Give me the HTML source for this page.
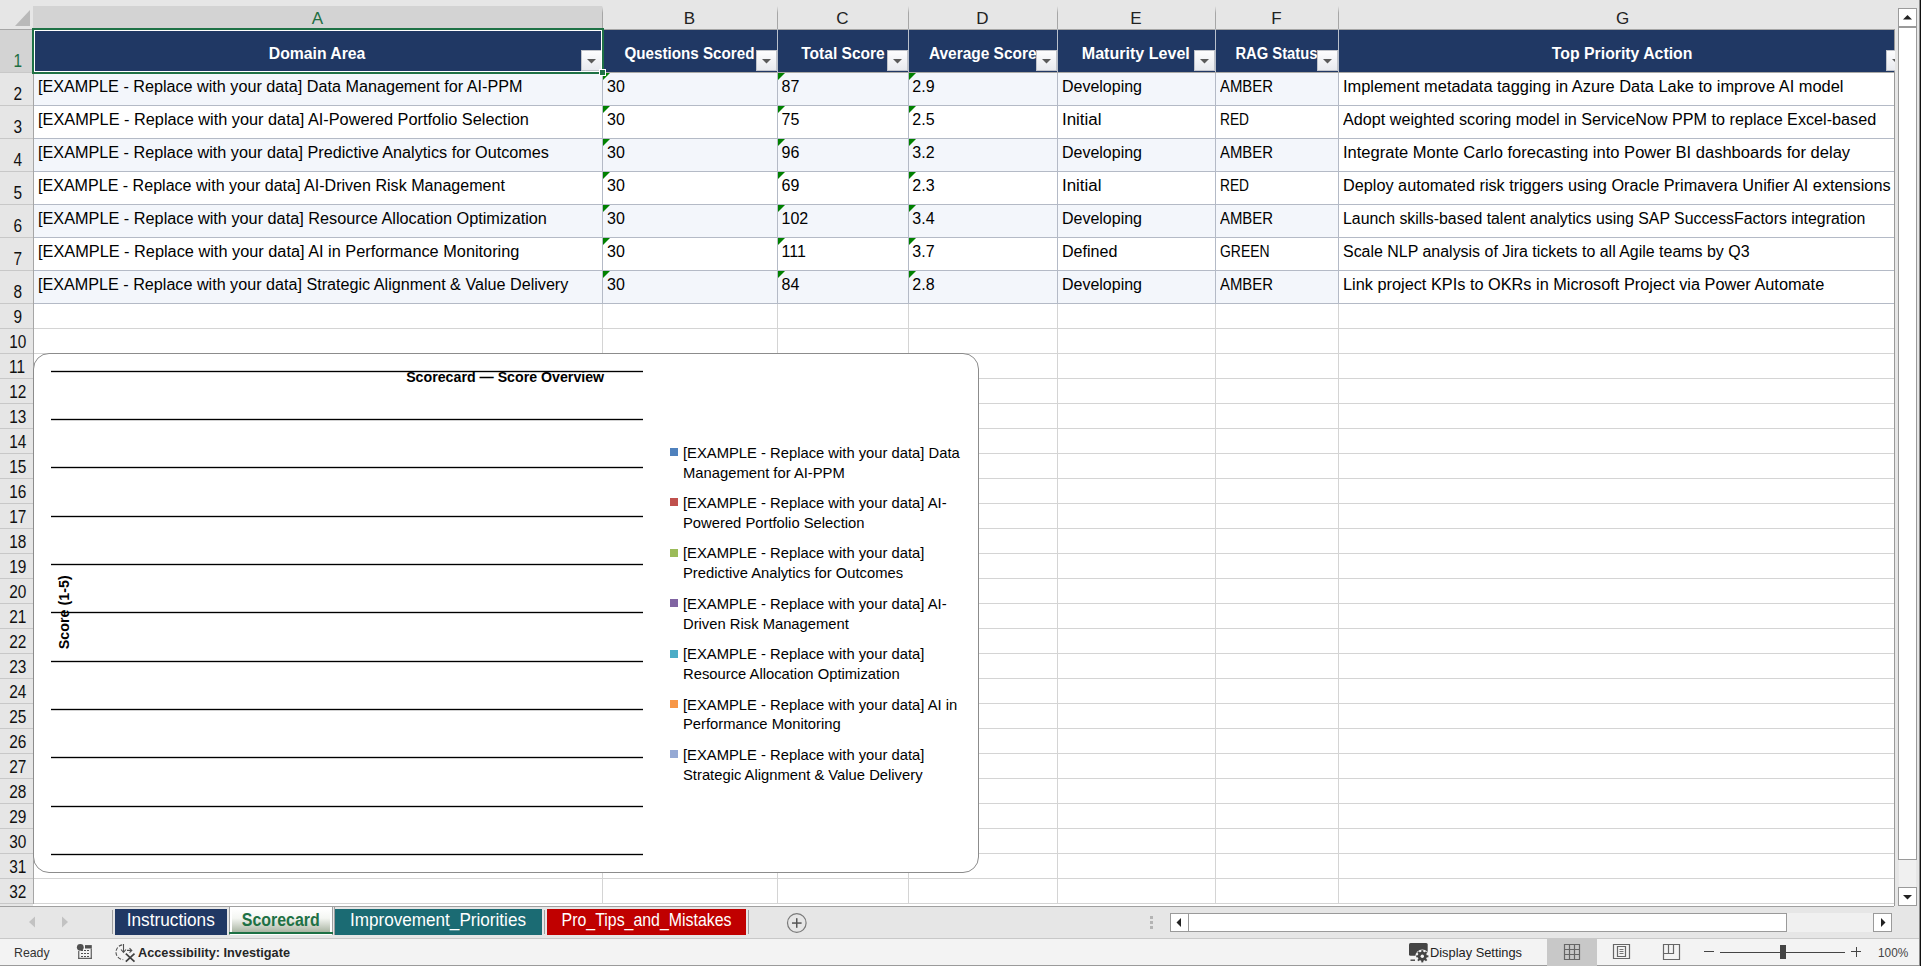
<!DOCTYPE html>
<html><head><meta charset="utf-8"><style>
html,body{margin:0;padding:0;}
body{width:1921px;height:966px;overflow:hidden;position:relative;font-family:"Liberation Sans", sans-serif;background:#fff;}
body div, body svg{position:absolute;}
svg *{position:static}
body div div, body div svg{position:absolute;}
</style></head><body>
<div style="left:0px;top:0px;width:1921px;height:966px;background:#e6e6e6"></div>
<div style="left:33px;top:29px;width:1861px;height:877px;background:#fff"></div>
<div style="left:33px;top:72px;width:1305px;height:33px;background:#f3f6fb"></div>
<div style="left:33px;top:105px;width:1305px;height:33px;background:#ffffff"></div>
<div style="left:33px;top:138px;width:1305px;height:33px;background:#f3f6fb"></div>
<div style="left:33px;top:171px;width:1305px;height:33px;background:#ffffff"></div>
<div style="left:33px;top:204px;width:1305px;height:33px;background:#f3f6fb"></div>
<div style="left:33px;top:237px;width:1305px;height:33px;background:#ffffff"></div>
<div style="left:33px;top:270px;width:1305px;height:33px;background:#f3f6fb"></div>
<div style="left:33px;top:29px;width:1861px;height:43px;background:#203864"></div>
<div style="left:33px;top:6px;width:569px;height:23px;background:#d3d3d3"></div>
<div style="left:0px;top:29px;width:33px;height:43px;background:#d3d3d3"></div>
<div style="left:602px;top:6px;width:1px;height:23px;background:linear-gradient(#e6e6e6,#a6a6a6 30%,#a6a6a6)"></div>
<div style="left:777px;top:6px;width:1px;height:23px;background:linear-gradient(#e6e6e6,#a6a6a6 30%,#a6a6a6)"></div>
<div style="left:908px;top:6px;width:1px;height:23px;background:linear-gradient(#e6e6e6,#a6a6a6 30%,#a6a6a6)"></div>
<div style="left:1057px;top:6px;width:1px;height:23px;background:linear-gradient(#e6e6e6,#a6a6a6 30%,#a6a6a6)"></div>
<div style="left:1215px;top:6px;width:1px;height:23px;background:linear-gradient(#e6e6e6,#a6a6a6 30%,#a6a6a6)"></div>
<div style="left:1338px;top:6px;width:1px;height:23px;background:linear-gradient(#e6e6e6,#a6a6a6 30%,#a6a6a6)"></div>
<div style="left:0px;top:29px;width:1894px;height:1px;background:#a6a6a6"></div>
<div style="left:0px;top:72px;width:33px;height:1px;background:#c8c8c8"></div>
<div style="left:0px;top:105px;width:33px;height:1px;background:#c8c8c8"></div>
<div style="left:0px;top:138px;width:33px;height:1px;background:#c8c8c8"></div>
<div style="left:0px;top:171px;width:33px;height:1px;background:#c8c8c8"></div>
<div style="left:0px;top:204px;width:33px;height:1px;background:#c8c8c8"></div>
<div style="left:0px;top:237px;width:33px;height:1px;background:#c8c8c8"></div>
<div style="left:0px;top:270px;width:33px;height:1px;background:#c8c8c8"></div>
<div style="left:0px;top:303px;width:33px;height:1px;background:#c8c8c8"></div>
<div style="left:0px;top:328px;width:33px;height:1px;background:#c8c8c8"></div>
<div style="left:0px;top:353px;width:33px;height:1px;background:#c8c8c8"></div>
<div style="left:0px;top:378px;width:33px;height:1px;background:#c8c8c8"></div>
<div style="left:0px;top:403px;width:33px;height:1px;background:#c8c8c8"></div>
<div style="left:0px;top:428px;width:33px;height:1px;background:#c8c8c8"></div>
<div style="left:0px;top:453px;width:33px;height:1px;background:#c8c8c8"></div>
<div style="left:0px;top:478px;width:33px;height:1px;background:#c8c8c8"></div>
<div style="left:0px;top:503px;width:33px;height:1px;background:#c8c8c8"></div>
<div style="left:0px;top:528px;width:33px;height:1px;background:#c8c8c8"></div>
<div style="left:0px;top:553px;width:33px;height:1px;background:#c8c8c8"></div>
<div style="left:0px;top:578px;width:33px;height:1px;background:#c8c8c8"></div>
<div style="left:0px;top:603px;width:33px;height:1px;background:#c8c8c8"></div>
<div style="left:0px;top:628px;width:33px;height:1px;background:#c8c8c8"></div>
<div style="left:0px;top:653px;width:33px;height:1px;background:#c8c8c8"></div>
<div style="left:0px;top:678px;width:33px;height:1px;background:#c8c8c8"></div>
<div style="left:0px;top:703px;width:33px;height:1px;background:#c8c8c8"></div>
<div style="left:0px;top:728px;width:33px;height:1px;background:#c8c8c8"></div>
<div style="left:0px;top:753px;width:33px;height:1px;background:#c8c8c8"></div>
<div style="left:0px;top:778px;width:33px;height:1px;background:#c8c8c8"></div>
<div style="left:0px;top:803px;width:33px;height:1px;background:#c8c8c8"></div>
<div style="left:0px;top:828px;width:33px;height:1px;background:#c8c8c8"></div>
<div style="left:0px;top:853px;width:33px;height:1px;background:#c8c8c8"></div>
<div style="left:0px;top:878px;width:33px;height:1px;background:#c8c8c8"></div>
<div style="left:0px;top:903px;width:33px;height:1px;background:#c8c8c8"></div>
<div style="left:33px;top:29px;width:1px;height:877px;background:#a6a6a6"></div>
<div style="left:602px;top:29px;width:1px;height:43px;background:#b8bfcb"></div>
<div style="left:602px;top:72px;width:1px;height:231px;background:#b4bac6"></div>
<div style="left:602px;top:303px;width:1px;height:600px;background:#d4d4d4"></div>
<div style="left:777px;top:29px;width:1px;height:43px;background:#b8bfcb"></div>
<div style="left:777px;top:72px;width:1px;height:231px;background:#b4bac6"></div>
<div style="left:777px;top:303px;width:1px;height:600px;background:#d4d4d4"></div>
<div style="left:908px;top:29px;width:1px;height:43px;background:#b8bfcb"></div>
<div style="left:908px;top:72px;width:1px;height:231px;background:#b4bac6"></div>
<div style="left:908px;top:303px;width:1px;height:600px;background:#d4d4d4"></div>
<div style="left:1057px;top:29px;width:1px;height:43px;background:#b8bfcb"></div>
<div style="left:1057px;top:72px;width:1px;height:231px;background:#b4bac6"></div>
<div style="left:1057px;top:303px;width:1px;height:600px;background:#d4d4d4"></div>
<div style="left:1215px;top:29px;width:1px;height:43px;background:#b8bfcb"></div>
<div style="left:1215px;top:72px;width:1px;height:231px;background:#b4bac6"></div>
<div style="left:1215px;top:303px;width:1px;height:600px;background:#d4d4d4"></div>
<div style="left:1338px;top:29px;width:1px;height:43px;background:#b8bfcb"></div>
<div style="left:1338px;top:72px;width:1px;height:231px;background:#b4bac6"></div>
<div style="left:1338px;top:303px;width:1px;height:600px;background:#d4d4d4"></div>
<div style="left:1894px;top:29px;width:1px;height:877px;background:#9a9a9a"></div>
<div style="left:34px;top:72px;width:1860px;height:1px;background:#aaa9a6"></div>
<div style="left:34px;top:105px;width:1860px;height:1px;background:#b4bac6"></div>
<div style="left:34px;top:138px;width:1860px;height:1px;background:#b4bac6"></div>
<div style="left:34px;top:171px;width:1860px;height:1px;background:#b4bac6"></div>
<div style="left:34px;top:204px;width:1860px;height:1px;background:#b4bac6"></div>
<div style="left:34px;top:237px;width:1860px;height:1px;background:#b4bac6"></div>
<div style="left:34px;top:270px;width:1860px;height:1px;background:#b4bac6"></div>
<div style="left:34px;top:303px;width:1860px;height:1px;background:#b4bac6"></div>
<div style="left:34px;top:328px;width:1860px;height:1px;background:#d4d4d4"></div>
<div style="left:34px;top:353px;width:1860px;height:1px;background:#d4d4d4"></div>
<div style="left:34px;top:378px;width:1860px;height:1px;background:#d4d4d4"></div>
<div style="left:34px;top:403px;width:1860px;height:1px;background:#d4d4d4"></div>
<div style="left:34px;top:428px;width:1860px;height:1px;background:#d4d4d4"></div>
<div style="left:34px;top:453px;width:1860px;height:1px;background:#d4d4d4"></div>
<div style="left:34px;top:478px;width:1860px;height:1px;background:#d4d4d4"></div>
<div style="left:34px;top:503px;width:1860px;height:1px;background:#d4d4d4"></div>
<div style="left:34px;top:528px;width:1860px;height:1px;background:#d4d4d4"></div>
<div style="left:34px;top:553px;width:1860px;height:1px;background:#d4d4d4"></div>
<div style="left:34px;top:578px;width:1860px;height:1px;background:#d4d4d4"></div>
<div style="left:34px;top:603px;width:1860px;height:1px;background:#d4d4d4"></div>
<div style="left:34px;top:628px;width:1860px;height:1px;background:#d4d4d4"></div>
<div style="left:34px;top:653px;width:1860px;height:1px;background:#d4d4d4"></div>
<div style="left:34px;top:678px;width:1860px;height:1px;background:#d4d4d4"></div>
<div style="left:34px;top:703px;width:1860px;height:1px;background:#d4d4d4"></div>
<div style="left:34px;top:728px;width:1860px;height:1px;background:#d4d4d4"></div>
<div style="left:34px;top:753px;width:1860px;height:1px;background:#d4d4d4"></div>
<div style="left:34px;top:778px;width:1860px;height:1px;background:#d4d4d4"></div>
<div style="left:34px;top:803px;width:1860px;height:1px;background:#d4d4d4"></div>
<div style="left:34px;top:828px;width:1860px;height:1px;background:#d4d4d4"></div>
<div style="left:34px;top:853px;width:1860px;height:1px;background:#d4d4d4"></div>
<div style="left:34px;top:878px;width:1860px;height:1px;background:#d4d4d4"></div>
<div style="left:34px;top:903px;width:1860px;height:1px;background:#d4d4d4"></div>
<div style="left:0px;top:906px;width:1894px;height:1px;background:#a0a0a0"></div>
<div style="left:33px;top:904px;width:1861px;height:2px;background:#fff"></div>
<svg style="left:0;top:0" width="33" height="29"><polygon points="15,26 30,26 30,10" fill="#b9b9b9"/></svg>
<div style="left:311.83px;top:9.61px;font-size:17px;line-height:17px;font-weight:normal;color:#1e6e42;white-space:pre;transform-origin:50% 0;transform:scaleX(1.0000)">A</div>
<div style="left:683.83px;top:9.61px;font-size:17px;line-height:17px;font-weight:normal;color:#222;white-space:pre;transform-origin:50% 0;transform:scaleX(1.0000)">B</div>
<div style="left:836.36px;top:9.61px;font-size:17px;line-height:17px;font-weight:normal;color:#222;white-space:pre;transform-origin:50% 0;transform:scaleX(1.0000)">C</div>
<div style="left:976.36px;top:9.61px;font-size:17px;line-height:17px;font-weight:normal;color:#222;white-space:pre;transform-origin:50% 0;transform:scaleX(1.0000)">D</div>
<div style="left:1130.33px;top:9.61px;font-size:17px;line-height:17px;font-weight:normal;color:#222;white-space:pre;transform-origin:50% 0;transform:scaleX(1.0000)">E</div>
<div style="left:1271.30px;top:9.61px;font-size:17px;line-height:17px;font-weight:normal;color:#222;white-space:pre;transform-origin:50% 0;transform:scaleX(1.0000)">F</div>
<div style="left:1615.88px;top:9.61px;font-size:17px;line-height:17px;font-weight:normal;color:#222;white-space:pre;transform-origin:50% 0;transform:scaleX(1.0000)">G</div>
<div style="left:12.63px;top:52.59px;font-size:17.5px;line-height:17.5px;font-weight:normal;color:#1e6e42;white-space:pre;transform-origin:50% 0;transform:scaleX(0.8800)">1</div>
<div style="left:12.63px;top:85.59px;font-size:17.5px;line-height:17.5px;font-weight:normal;color:#111;white-space:pre;transform-origin:50% 0;transform:scaleX(0.8800)">2</div>
<div style="left:12.63px;top:118.59px;font-size:17.5px;line-height:17.5px;font-weight:normal;color:#111;white-space:pre;transform-origin:50% 0;transform:scaleX(0.8800)">3</div>
<div style="left:12.63px;top:151.59px;font-size:17.5px;line-height:17.5px;font-weight:normal;color:#111;white-space:pre;transform-origin:50% 0;transform:scaleX(0.8800)">4</div>
<div style="left:12.63px;top:184.59px;font-size:17.5px;line-height:17.5px;font-weight:normal;color:#111;white-space:pre;transform-origin:50% 0;transform:scaleX(0.8800)">5</div>
<div style="left:12.63px;top:217.59px;font-size:17.5px;line-height:17.5px;font-weight:normal;color:#111;white-space:pre;transform-origin:50% 0;transform:scaleX(0.8800)">6</div>
<div style="left:12.63px;top:250.59px;font-size:17.5px;line-height:17.5px;font-weight:normal;color:#111;white-space:pre;transform-origin:50% 0;transform:scaleX(0.8800)">7</div>
<div style="left:12.63px;top:283.59px;font-size:17.5px;line-height:17.5px;font-weight:normal;color:#111;white-space:pre;transform-origin:50% 0;transform:scaleX(0.8800)">8</div>
<div style="left:12.63px;top:308.59px;font-size:17.5px;line-height:17.5px;font-weight:normal;color:#111;white-space:pre;transform-origin:50% 0;transform:scaleX(0.8800)">9</div>
<div style="left:7.77px;top:333.59px;font-size:17.5px;line-height:17.5px;font-weight:normal;color:#111;white-space:pre;transform-origin:50% 0;transform:scaleX(0.8800)">10</div>
<div style="left:8.41px;top:358.59px;font-size:17.5px;line-height:17.5px;font-weight:normal;color:#111;white-space:pre;transform-origin:50% 0;transform:scaleX(0.8800)">11</div>
<div style="left:7.77px;top:383.59px;font-size:17.5px;line-height:17.5px;font-weight:normal;color:#111;white-space:pre;transform-origin:50% 0;transform:scaleX(0.8800)">12</div>
<div style="left:7.77px;top:408.59px;font-size:17.5px;line-height:17.5px;font-weight:normal;color:#111;white-space:pre;transform-origin:50% 0;transform:scaleX(0.8800)">13</div>
<div style="left:7.77px;top:433.59px;font-size:17.5px;line-height:17.5px;font-weight:normal;color:#111;white-space:pre;transform-origin:50% 0;transform:scaleX(0.8800)">14</div>
<div style="left:7.77px;top:458.59px;font-size:17.5px;line-height:17.5px;font-weight:normal;color:#111;white-space:pre;transform-origin:50% 0;transform:scaleX(0.8800)">15</div>
<div style="left:7.77px;top:483.59px;font-size:17.5px;line-height:17.5px;font-weight:normal;color:#111;white-space:pre;transform-origin:50% 0;transform:scaleX(0.8800)">16</div>
<div style="left:7.77px;top:508.59px;font-size:17.5px;line-height:17.5px;font-weight:normal;color:#111;white-space:pre;transform-origin:50% 0;transform:scaleX(0.8800)">17</div>
<div style="left:7.77px;top:533.59px;font-size:17.5px;line-height:17.5px;font-weight:normal;color:#111;white-space:pre;transform-origin:50% 0;transform:scaleX(0.8800)">18</div>
<div style="left:7.77px;top:558.59px;font-size:17.5px;line-height:17.5px;font-weight:normal;color:#111;white-space:pre;transform-origin:50% 0;transform:scaleX(0.8800)">19</div>
<div style="left:7.77px;top:583.59px;font-size:17.5px;line-height:17.5px;font-weight:normal;color:#111;white-space:pre;transform-origin:50% 0;transform:scaleX(0.8800)">20</div>
<div style="left:7.77px;top:608.59px;font-size:17.5px;line-height:17.5px;font-weight:normal;color:#111;white-space:pre;transform-origin:50% 0;transform:scaleX(0.8800)">21</div>
<div style="left:7.77px;top:633.59px;font-size:17.5px;line-height:17.5px;font-weight:normal;color:#111;white-space:pre;transform-origin:50% 0;transform:scaleX(0.8800)">22</div>
<div style="left:7.77px;top:658.59px;font-size:17.5px;line-height:17.5px;font-weight:normal;color:#111;white-space:pre;transform-origin:50% 0;transform:scaleX(0.8800)">23</div>
<div style="left:7.77px;top:683.59px;font-size:17.5px;line-height:17.5px;font-weight:normal;color:#111;white-space:pre;transform-origin:50% 0;transform:scaleX(0.8800)">24</div>
<div style="left:7.77px;top:708.59px;font-size:17.5px;line-height:17.5px;font-weight:normal;color:#111;white-space:pre;transform-origin:50% 0;transform:scaleX(0.8800)">25</div>
<div style="left:7.77px;top:733.59px;font-size:17.5px;line-height:17.5px;font-weight:normal;color:#111;white-space:pre;transform-origin:50% 0;transform:scaleX(0.8800)">26</div>
<div style="left:7.77px;top:758.59px;font-size:17.5px;line-height:17.5px;font-weight:normal;color:#111;white-space:pre;transform-origin:50% 0;transform:scaleX(0.8800)">27</div>
<div style="left:7.77px;top:783.59px;font-size:17.5px;line-height:17.5px;font-weight:normal;color:#111;white-space:pre;transform-origin:50% 0;transform:scaleX(0.8800)">28</div>
<div style="left:7.77px;top:808.59px;font-size:17.5px;line-height:17.5px;font-weight:normal;color:#111;white-space:pre;transform-origin:50% 0;transform:scaleX(0.8800)">29</div>
<div style="left:7.77px;top:833.59px;font-size:17.5px;line-height:17.5px;font-weight:normal;color:#111;white-space:pre;transform-origin:50% 0;transform:scaleX(0.8800)">30</div>
<div style="left:7.77px;top:858.59px;font-size:17.5px;line-height:17.5px;font-weight:normal;color:#111;white-space:pre;transform-origin:50% 0;transform:scaleX(0.8800)">31</div>
<div style="left:7.77px;top:883.59px;font-size:17.5px;line-height:17.5px;font-weight:normal;color:#111;white-space:pre;transform-origin:50% 0;transform:scaleX(0.8800)">32</div>
<div style="left:268.45px;top:45.76px;font-size:16px;line-height:16px;font-weight:bold;color:#fff;white-space:pre;transform-origin:50% 0;transform:scaleX(0.9846)">Domain Area</div>
<div style="left:621.04px;top:45.76px;font-size:16px;line-height:16px;font-weight:bold;color:#fff;white-space:pre;transform-origin:50% 0;transform:scaleX(0.9494)">Questions Scored</div>
<div style="left:799.52px;top:45.76px;font-size:16px;line-height:16px;font-weight:bold;color:#fff;white-space:pre;transform-origin:50% 0;transform:scaleX(0.9715)">Total Score</div>
<div style="left:926.77px;top:45.76px;font-size:16px;line-height:16px;font-weight:bold;color:#fff;white-space:pre;transform-origin:50% 0;transform:scaleX(0.9653)">Average Score</div>
<div style="left:1082.20px;top:45.76px;font-size:16px;line-height:16px;font-weight:bold;color:#fff;white-space:pre;transform-origin:50% 0;transform:scaleX(1.0038)">Maturity Level</div>
<div style="left:1232.05px;top:45.76px;font-size:16px;line-height:16px;font-weight:bold;color:#fff;white-space:pre;transform-origin:50% 0;transform:scaleX(0.9223)">RAG Status</div>
<div style="left:1551.09px;top:45.76px;font-size:16px;line-height:16px;font-weight:bold;color:#fff;white-space:pre;transform-origin:50% 0;transform:scaleX(0.9879)">Top Priority Action</div>
<div style="left:581px;top:50px;width:19px;height:19px;border:1px solid #c0c3ca;background:linear-gradient(#fdfdfe,#e8eaef)"><svg style="left:5px;top:8px" width="9" height="5"><polygon points="0,0 9,0 4.5,4.5" fill="#5a5a5a"/></svg></div>
<div style="left:756px;top:50px;width:19px;height:19px;border:1px solid #c0c3ca;background:linear-gradient(#fdfdfe,#e8eaef)"><svg style="left:5px;top:8px" width="9" height="5"><polygon points="0,0 9,0 4.5,4.5" fill="#5a5a5a"/></svg></div>
<div style="left:887px;top:50px;width:19px;height:19px;border:1px solid #c0c3ca;background:linear-gradient(#fdfdfe,#e8eaef)"><svg style="left:5px;top:8px" width="9" height="5"><polygon points="0,0 9,0 4.5,4.5" fill="#5a5a5a"/></svg></div>
<div style="left:1036px;top:50px;width:19px;height:19px;border:1px solid #c0c3ca;background:linear-gradient(#fdfdfe,#e8eaef)"><svg style="left:5px;top:8px" width="9" height="5"><polygon points="0,0 9,0 4.5,4.5" fill="#5a5a5a"/></svg></div>
<div style="left:1194px;top:50px;width:19px;height:19px;border:1px solid #c0c3ca;background:linear-gradient(#fdfdfe,#e8eaef)"><svg style="left:5px;top:8px" width="9" height="5"><polygon points="0,0 9,0 4.5,4.5" fill="#5a5a5a"/></svg></div>
<div style="left:1317px;top:50px;width:19px;height:19px;border:1px solid #c0c3ca;background:linear-gradient(#fdfdfe,#e8eaef)"><svg style="left:5px;top:8px" width="9" height="5"><polygon points="0,0 9,0 4.5,4.5" fill="#5a5a5a"/></svg></div>
<div style="left:1886px;top:50px;width:19px;height:19px;border:1px solid #c0c3ca;background:linear-gradient(#fdfdfe,#e8eaef)"><svg style="left:5px;top:8px" width="9" height="5"><polygon points="0,0 9,0 4.5,4.5" fill="#5a5a5a"/></svg></div>
<div style="left:38.30px;top:79.46px;font-size:16px;line-height:16px;font-weight:normal;color:#000;white-space:pre;transform-origin:0 0;transform:scaleX(1.0108)">[EXAMPLE - Replace with your data] Data Management for AI-PPM</div>
<div style="left:607.00px;top:79.46px;font-size:16px;line-height:16px;font-weight:normal;color:#000;white-space:pre;transform-origin:0 0;transform:scaleX(1.0000)">30</div>
<div style="left:781.50px;top:79.46px;font-size:16px;line-height:16px;font-weight:normal;color:#000;white-space:pre;transform-origin:0 0;transform:scaleX(1.0000)">87</div>
<div style="left:912.30px;top:79.46px;font-size:16px;line-height:16px;font-weight:normal;color:#000;white-space:pre;transform-origin:0 0;transform:scaleX(1.0000)">2.9</div>
<div style="left:1061.80px;top:79.46px;font-size:16px;line-height:16px;font-weight:normal;color:#000;white-space:pre;transform-origin:0 0;transform:scaleX(0.9992)">Developing</div>
<div style="left:1219.50px;top:79.46px;font-size:16px;line-height:16px;font-weight:normal;color:#000;white-space:pre;transform-origin:0 0;transform:scaleX(0.9314)">AMBER</div>
<div style="left:1343.00px;top:79.46px;font-size:16px;line-height:16px;font-weight:normal;color:#000;white-space:pre;transform-origin:0 0;transform:scaleX(1.0250)">Implement metadata tagging in Azure Data Lake to improve AI model</div>
<svg style="left:603px;top:73px" width="8" height="8"><polygon points="0,0 7,0 0,7" fill="#008000"/></svg>
<svg style="left:778px;top:73px" width="8" height="8"><polygon points="0,0 7,0 0,7" fill="#008000"/></svg>
<svg style="left:909px;top:73px" width="8" height="8"><polygon points="0,0 7,0 0,7" fill="#008000"/></svg>
<div style="left:38.30px;top:112.46px;font-size:16px;line-height:16px;font-weight:normal;color:#000;white-space:pre;transform-origin:0 0;transform:scaleX(1.0184)">[EXAMPLE - Replace with your data] AI-Powered Portfolio Selection</div>
<div style="left:607.00px;top:112.46px;font-size:16px;line-height:16px;font-weight:normal;color:#000;white-space:pre;transform-origin:0 0;transform:scaleX(1.0000)">30</div>
<div style="left:781.50px;top:112.46px;font-size:16px;line-height:16px;font-weight:normal;color:#000;white-space:pre;transform-origin:0 0;transform:scaleX(1.0000)">75</div>
<div style="left:912.30px;top:112.46px;font-size:16px;line-height:16px;font-weight:normal;color:#000;white-space:pre;transform-origin:0 0;transform:scaleX(1.0000)">2.5</div>
<div style="left:1061.80px;top:112.46px;font-size:16px;line-height:16px;font-weight:normal;color:#000;white-space:pre;transform-origin:0 0;transform:scaleX(1.0573)">Initial</div>
<div style="left:1219.50px;top:112.46px;font-size:16px;line-height:16px;font-weight:normal;color:#000;white-space:pre;transform-origin:0 0;transform:scaleX(0.8585)">RED</div>
<div style="left:1343.00px;top:112.46px;font-size:16px;line-height:16px;font-weight:normal;color:#000;white-space:pre;transform-origin:0 0;transform:scaleX(1.0109)">Adopt weighted scoring model in ServiceNow PPM to replace Excel-based</div>
<svg style="left:603px;top:106px" width="8" height="8"><polygon points="0,0 7,0 0,7" fill="#008000"/></svg>
<svg style="left:778px;top:106px" width="8" height="8"><polygon points="0,0 7,0 0,7" fill="#008000"/></svg>
<svg style="left:909px;top:106px" width="8" height="8"><polygon points="0,0 7,0 0,7" fill="#008000"/></svg>
<div style="left:38.30px;top:145.46px;font-size:16px;line-height:16px;font-weight:normal;color:#000;white-space:pre;transform-origin:0 0;transform:scaleX(1.0134)">[EXAMPLE - Replace with your data] Predictive Analytics for Outcomes</div>
<div style="left:607.00px;top:145.46px;font-size:16px;line-height:16px;font-weight:normal;color:#000;white-space:pre;transform-origin:0 0;transform:scaleX(1.0000)">30</div>
<div style="left:781.50px;top:145.46px;font-size:16px;line-height:16px;font-weight:normal;color:#000;white-space:pre;transform-origin:0 0;transform:scaleX(1.0000)">96</div>
<div style="left:912.30px;top:145.46px;font-size:16px;line-height:16px;font-weight:normal;color:#000;white-space:pre;transform-origin:0 0;transform:scaleX(1.0000)">3.2</div>
<div style="left:1061.80px;top:145.46px;font-size:16px;line-height:16px;font-weight:normal;color:#000;white-space:pre;transform-origin:0 0;transform:scaleX(0.9992)">Developing</div>
<div style="left:1219.50px;top:145.46px;font-size:16px;line-height:16px;font-weight:normal;color:#000;white-space:pre;transform-origin:0 0;transform:scaleX(0.9314)">AMBER</div>
<div style="left:1343.00px;top:145.46px;font-size:16px;line-height:16px;font-weight:normal;color:#000;white-space:pre;transform-origin:0 0;transform:scaleX(1.0329)">Integrate Monte Carlo forecasting into Power BI dashboards for delay</div>
<svg style="left:603px;top:139px" width="8" height="8"><polygon points="0,0 7,0 0,7" fill="#008000"/></svg>
<svg style="left:778px;top:139px" width="8" height="8"><polygon points="0,0 7,0 0,7" fill="#008000"/></svg>
<svg style="left:909px;top:139px" width="8" height="8"><polygon points="0,0 7,0 0,7" fill="#008000"/></svg>
<div style="left:38.30px;top:178.46px;font-size:16px;line-height:16px;font-weight:normal;color:#000;white-space:pre;transform-origin:0 0;transform:scaleX(1.0039)">[EXAMPLE - Replace with your data] AI-Driven Risk Management</div>
<div style="left:607.00px;top:178.46px;font-size:16px;line-height:16px;font-weight:normal;color:#000;white-space:pre;transform-origin:0 0;transform:scaleX(1.0000)">30</div>
<div style="left:781.50px;top:178.46px;font-size:16px;line-height:16px;font-weight:normal;color:#000;white-space:pre;transform-origin:0 0;transform:scaleX(1.0000)">69</div>
<div style="left:912.30px;top:178.46px;font-size:16px;line-height:16px;font-weight:normal;color:#000;white-space:pre;transform-origin:0 0;transform:scaleX(1.0000)">2.3</div>
<div style="left:1061.80px;top:178.46px;font-size:16px;line-height:16px;font-weight:normal;color:#000;white-space:pre;transform-origin:0 0;transform:scaleX(1.0573)">Initial</div>
<div style="left:1219.50px;top:178.46px;font-size:16px;line-height:16px;font-weight:normal;color:#000;white-space:pre;transform-origin:0 0;transform:scaleX(0.8585)">RED</div>
<div style="left:1343.00px;top:178.46px;font-size:16px;line-height:16px;font-weight:normal;color:#000;white-space:pre;transform-origin:0 0;transform:scaleX(1.0161)">Deploy automated risk triggers using Oracle Primavera Unifier AI extensions</div>
<svg style="left:603px;top:172px" width="8" height="8"><polygon points="0,0 7,0 0,7" fill="#008000"/></svg>
<svg style="left:778px;top:172px" width="8" height="8"><polygon points="0,0 7,0 0,7" fill="#008000"/></svg>
<svg style="left:909px;top:172px" width="8" height="8"><polygon points="0,0 7,0 0,7" fill="#008000"/></svg>
<div style="left:38.30px;top:211.46px;font-size:16px;line-height:16px;font-weight:normal;color:#000;white-space:pre;transform-origin:0 0;transform:scaleX(1.0164)">[EXAMPLE - Replace with your data] Resource Allocation Optimization</div>
<div style="left:607.00px;top:211.46px;font-size:16px;line-height:16px;font-weight:normal;color:#000;white-space:pre;transform-origin:0 0;transform:scaleX(1.0000)">30</div>
<div style="left:781.50px;top:211.46px;font-size:16px;line-height:16px;font-weight:normal;color:#000;white-space:pre;transform-origin:0 0;transform:scaleX(1.0000)">102</div>
<div style="left:912.30px;top:211.46px;font-size:16px;line-height:16px;font-weight:normal;color:#000;white-space:pre;transform-origin:0 0;transform:scaleX(1.0000)">3.4</div>
<div style="left:1061.80px;top:211.46px;font-size:16px;line-height:16px;font-weight:normal;color:#000;white-space:pre;transform-origin:0 0;transform:scaleX(0.9992)">Developing</div>
<div style="left:1219.50px;top:211.46px;font-size:16px;line-height:16px;font-weight:normal;color:#000;white-space:pre;transform-origin:0 0;transform:scaleX(0.9314)">AMBER</div>
<div style="left:1343.00px;top:211.46px;font-size:16px;line-height:16px;font-weight:normal;color:#000;white-space:pre;transform-origin:0 0;transform:scaleX(0.9909)">Launch skills-based talent analytics using SAP SuccessFactors integration</div>
<svg style="left:603px;top:205px" width="8" height="8"><polygon points="0,0 7,0 0,7" fill="#008000"/></svg>
<svg style="left:778px;top:205px" width="8" height="8"><polygon points="0,0 7,0 0,7" fill="#008000"/></svg>
<svg style="left:909px;top:205px" width="8" height="8"><polygon points="0,0 7,0 0,7" fill="#008000"/></svg>
<div style="left:38.30px;top:244.46px;font-size:16px;line-height:16px;font-weight:normal;color:#000;white-space:pre;transform-origin:0 0;transform:scaleX(1.0194)">[EXAMPLE - Replace with your data] AI in Performance Monitoring</div>
<div style="left:607.00px;top:244.46px;font-size:16px;line-height:16px;font-weight:normal;color:#000;white-space:pre;transform-origin:0 0;transform:scaleX(1.0000)">30</div>
<div style="left:781.50px;top:244.46px;font-size:16px;line-height:16px;font-weight:normal;color:#000;white-space:pre;transform-origin:0 0;transform:scaleX(1.0000)">111</div>
<div style="left:912.30px;top:244.46px;font-size:16px;line-height:16px;font-weight:normal;color:#000;white-space:pre;transform-origin:0 0;transform:scaleX(1.0000)">3.7</div>
<div style="left:1061.80px;top:244.46px;font-size:16px;line-height:16px;font-weight:normal;color:#000;white-space:pre;transform-origin:0 0;transform:scaleX(1.0044)">Defined</div>
<div style="left:1219.50px;top:244.46px;font-size:16px;line-height:16px;font-weight:normal;color:#000;white-space:pre;transform-origin:0 0;transform:scaleX(0.8716)">GREEN</div>
<div style="left:1343.00px;top:244.46px;font-size:16px;line-height:16px;font-weight:normal;color:#000;white-space:pre;transform-origin:0 0;transform:scaleX(0.9966)">Scale NLP analysis of Jira tickets to all Agile teams by Q3</div>
<svg style="left:603px;top:238px" width="8" height="8"><polygon points="0,0 7,0 0,7" fill="#008000"/></svg>
<svg style="left:778px;top:238px" width="8" height="8"><polygon points="0,0 7,0 0,7" fill="#008000"/></svg>
<svg style="left:909px;top:238px" width="8" height="8"><polygon points="0,0 7,0 0,7" fill="#008000"/></svg>
<div style="left:38.30px;top:277.46px;font-size:16px;line-height:16px;font-weight:normal;color:#000;white-space:pre;transform-origin:0 0;transform:scaleX(1.0096)">[EXAMPLE - Replace with your data] Strategic Alignment &amp; Value Delivery</div>
<div style="left:607.00px;top:277.46px;font-size:16px;line-height:16px;font-weight:normal;color:#000;white-space:pre;transform-origin:0 0;transform:scaleX(1.0000)">30</div>
<div style="left:781.50px;top:277.46px;font-size:16px;line-height:16px;font-weight:normal;color:#000;white-space:pre;transform-origin:0 0;transform:scaleX(1.0000)">84</div>
<div style="left:912.30px;top:277.46px;font-size:16px;line-height:16px;font-weight:normal;color:#000;white-space:pre;transform-origin:0 0;transform:scaleX(1.0000)">2.8</div>
<div style="left:1061.80px;top:277.46px;font-size:16px;line-height:16px;font-weight:normal;color:#000;white-space:pre;transform-origin:0 0;transform:scaleX(0.9992)">Developing</div>
<div style="left:1219.50px;top:277.46px;font-size:16px;line-height:16px;font-weight:normal;color:#000;white-space:pre;transform-origin:0 0;transform:scaleX(0.9314)">AMBER</div>
<div style="left:1343.00px;top:277.46px;font-size:16px;line-height:16px;font-weight:normal;color:#000;white-space:pre;transform-origin:0 0;transform:scaleX(1.0191)">Link project KPIs to OKRs in Microsoft Project via Power Automate</div>
<svg style="left:603px;top:271px" width="8" height="8"><polygon points="0,0 7,0 0,7" fill="#008000"/></svg>
<svg style="left:778px;top:271px" width="8" height="8"><polygon points="0,0 7,0 0,7" fill="#008000"/></svg>
<svg style="left:909px;top:271px" width="8" height="8"><polygon points="0,0 7,0 0,7" fill="#008000"/></svg>
<div style="left:32px;top:28px;width:572px;height:46px;border:2px solid #1e7145;box-sizing:border-box"></div>
<div style="left:34px;top:30px;width:568px;height:42px;border:1px solid #fff;box-sizing:border-box"></div>
<div style="left:600px;top:70px;width:5px;height:5px;background:#1e7145;outline:1px solid #fff"></div>
<div style="left:33px;top:353px;width:946px;height:520px;box-sizing:border-box;border:1px solid #8c8c8c;border-radius:16px;background:#fff"></div>
<svg style="left:0;top:0" width="1921" height="966"><rect x="51" y="370" width="592" height="3" fill="#000" fill-opacity="0.18"/><rect x="51" y="371" width="592" height="1" fill="#000"/><rect x="51" y="418" width="592" height="3" fill="#000" fill-opacity="0.18"/><rect x="51" y="419" width="592" height="1" fill="#000"/><rect x="51" y="466" width="592" height="3" fill="#000" fill-opacity="0.18"/><rect x="51" y="467" width="592" height="1" fill="#000"/><rect x="51" y="515" width="592" height="3" fill="#000" fill-opacity="0.18"/><rect x="51" y="516" width="592" height="1" fill="#000"/><rect x="51" y="563" width="592" height="3" fill="#000" fill-opacity="0.18"/><rect x="51" y="564" width="592" height="1" fill="#000"/><rect x="51" y="611" width="592" height="3" fill="#000" fill-opacity="0.18"/><rect x="51" y="612" width="592" height="1" fill="#000"/><rect x="51" y="660" width="592" height="3" fill="#000" fill-opacity="0.18"/><rect x="51" y="661" width="592" height="1" fill="#000"/><rect x="51" y="708" width="592" height="3" fill="#000" fill-opacity="0.18"/><rect x="51" y="709" width="592" height="1" fill="#000"/><rect x="51" y="756" width="592" height="3" fill="#000" fill-opacity="0.18"/><rect x="51" y="757" width="592" height="1" fill="#000"/><rect x="51" y="805" width="592" height="3" fill="#000" fill-opacity="0.18"/><rect x="51" y="806" width="592" height="1" fill="#000"/><rect x="51" y="853" width="592" height="3" fill="#000" fill-opacity="0.18"/><rect x="51" y="854" width="592" height="1" fill="#000"/></svg>
<div style="left:404.34px;top:369.53px;font-size:14.5px;line-height:14.5px;font-weight:bold;color:#000;white-space:pre;transform-origin:50% 0;transform:scaleX(0.9787)">Scorecard — Score Overview</div>
<div style="left:27.10px;top:605.45px;font-size:14.5px;line-height:14.5px;font-weight:bold;color:#000;white-space:pre;transform-origin:50% 50%;transform:rotate(-90deg) scaleX(0.9873)">Score (1-5)</div>
<div style="left:670px;top:448px;width:8px;height:8px;background:#4f81bd"></div>
<div style="left:683.40px;top:444.70px;font-size:15px;line-height:15px;font-weight:normal;color:#000;white-space:pre;transform-origin:0 0;transform:scaleX(0.9850)">[EXAMPLE - Replace with your data] Data</div>
<div style="left:683.40px;top:464.50px;font-size:15px;line-height:15px;font-weight:normal;color:#000;white-space:pre;transform-origin:0 0;transform:scaleX(0.9850)">Management for AI-PPM</div>
<div style="left:670px;top:498px;width:8px;height:8px;background:#c0504d"></div>
<div style="left:683.40px;top:495.08px;font-size:15px;line-height:15px;font-weight:normal;color:#000;white-space:pre;transform-origin:0 0;transform:scaleX(0.9850)">[EXAMPLE - Replace with your data] AI-</div>
<div style="left:683.40px;top:514.88px;font-size:15px;line-height:15px;font-weight:normal;color:#000;white-space:pre;transform-origin:0 0;transform:scaleX(0.9850)">Powered Portfolio Selection</div>
<div style="left:670px;top:549px;width:8px;height:8px;background:#9bbb59"></div>
<div style="left:683.40px;top:545.46px;font-size:15px;line-height:15px;font-weight:normal;color:#000;white-space:pre;transform-origin:0 0;transform:scaleX(0.9850)">[EXAMPLE - Replace with your data]</div>
<div style="left:683.40px;top:565.26px;font-size:15px;line-height:15px;font-weight:normal;color:#000;white-space:pre;transform-origin:0 0;transform:scaleX(0.9850)">Predictive Analytics for Outcomes</div>
<div style="left:670px;top:599px;width:8px;height:8px;background:#8064a2"></div>
<div style="left:683.40px;top:595.84px;font-size:15px;line-height:15px;font-weight:normal;color:#000;white-space:pre;transform-origin:0 0;transform:scaleX(0.9850)">[EXAMPLE - Replace with your data] AI-</div>
<div style="left:683.40px;top:615.64px;font-size:15px;line-height:15px;font-weight:normal;color:#000;white-space:pre;transform-origin:0 0;transform:scaleX(0.9850)">Driven Risk Management</div>
<div style="left:670px;top:650px;width:8px;height:8px;background:#4bacc6"></div>
<div style="left:683.40px;top:646.22px;font-size:15px;line-height:15px;font-weight:normal;color:#000;white-space:pre;transform-origin:0 0;transform:scaleX(0.9850)">[EXAMPLE - Replace with your data]</div>
<div style="left:683.40px;top:666.02px;font-size:15px;line-height:15px;font-weight:normal;color:#000;white-space:pre;transform-origin:0 0;transform:scaleX(0.9850)">Resource Allocation Optimization</div>
<div style="left:670px;top:700px;width:8px;height:8px;background:#f79646"></div>
<div style="left:683.40px;top:696.60px;font-size:15px;line-height:15px;font-weight:normal;color:#000;white-space:pre;transform-origin:0 0;transform:scaleX(0.9850)">[EXAMPLE - Replace with your data] AI in</div>
<div style="left:683.40px;top:716.40px;font-size:15px;line-height:15px;font-weight:normal;color:#000;white-space:pre;transform-origin:0 0;transform:scaleX(0.9850)">Performance Monitoring</div>
<div style="left:670px;top:750px;width:8px;height:8px;background:#95a9d4"></div>
<div style="left:683.40px;top:746.98px;font-size:15px;line-height:15px;font-weight:normal;color:#000;white-space:pre;transform-origin:0 0;transform:scaleX(0.9850)">[EXAMPLE - Replace with your data]</div>
<div style="left:683.40px;top:766.78px;font-size:15px;line-height:15px;font-weight:normal;color:#000;white-space:pre;transform-origin:0 0;transform:scaleX(0.9850)">Strategic Alignment &amp; Value Delivery</div>
<div style="left:1895px;top:0px;width:26px;height:906px;background:#e6e6e6"></div>
<div style="left:1898px;top:8px;width:19px;height:19px;background:#fff;border:1px solid #9a9a9a;box-sizing:border-box"></div>
<svg style="left:1898px;top:8px" width="19" height="19"><polygon points="5,11.5 14,11.5 9.5,7" fill="#222"/></svg>
<div style="left:1898px;top:27px;width:19px;height:833px;background:#fff;border:1px solid #9a9a9a;box-sizing:border-box"></div>
<div style="left:1899px;top:860px;width:17px;height:27px;background:#f0f0f0"></div>
<div style="left:1898px;top:887px;width:19px;height:19px;background:#fff;border:1px solid #9a9a9a;box-sizing:border-box"></div>
<svg style="left:1898px;top:887px" width="19" height="19"><polygon points="5,8 14,8 9.5,12.5" fill="#222"/></svg>
<div style="left:1919px;top:0px;width:1px;height:966px;background:#8a8a8a"></div>
<div style="left:1920px;top:0px;width:1px;height:966px;background:#111"></div>
<div style="left:0px;top:907px;width:1919px;height:31px;background:#e6e6e6"></div>
<div style="left:0px;top:938px;width:1919px;height:1px;background:#c8c8c8"></div>
<svg style="left:0;top:907px" width="120" height="31"><polygon points="29,15 35,9.5 35,20.5" fill="#c2c2c2"/><polygon points="62,9.5 68,15 62,20.5" fill="#c2c2c2"/></svg>
<div style="left:112px;top:910px;width:1px;height:24px;background:#a0a0a0"></div>
<div style="left:115px;top:909px;width:112px;height:26px;background:#203864"></div>
<div style="left:126.26px;top:912.19px;font-size:17.5px;line-height:17.5px;font-weight:normal;color:#fff;white-space:pre;transform-origin:50% 0;transform:scaleX(0.9834)">Instructions</div>
<div style="left:229px;top:906px;width:104px;height:29px;background:#fff;border:1px solid #a0a0a0;border-bottom:none;box-sizing:border-box"></div>
<div style="left:232px;top:909px;width:98px;height:23px;background:linear-gradient(#ffffff 0%,#f4f6f2 40%,#aab5a3 100%)"></div>
<div style="left:229px;top:932px;width:104px;height:2px;background:#1e7145"></div>
<div style="left:237.50px;top:912.19px;font-size:17.5px;line-height:17.5px;font-weight:bold;color:#1e7145;white-space:pre;transform-origin:50% 0;transform:scaleX(0.9111)">Scorecard</div>
<div style="left:334px;top:906px;width:1px;height:29px;background:#a0a0a0"></div>
<div style="left:335px;top:909px;width:207px;height:26px;background:#1b6b73"></div>
<div style="left:348.44px;top:912.19px;font-size:17.5px;line-height:17.5px;font-weight:normal;color:#fff;white-space:pre;transform-origin:50% 0;transform:scaleX(0.9782)">Improvement_Priorities</div>
<div style="left:544px;top:910px;width:1px;height:24px;background:#a0a0a0"></div>
<div style="left:547px;top:909px;width:199px;height:26px;background:#c00000"></div>
<div style="left:552.95px;top:912.19px;font-size:17.5px;line-height:17.5px;font-weight:normal;color:#fff;white-space:pre;transform-origin:50% 0;transform:scaleX(0.9086)">Pro_Tips_and_Mistakes</div>
<div style="left:748px;top:910px;width:1px;height:24px;background:#a0a0a0"></div>
<svg style="left:786px;top:912px" width="22" height="22"><circle cx="10.8" cy="11" r="9.3" fill="none" stroke="#7a7a7a" stroke-width="1.2"/><rect x="6" y="10.3" width="9.6" height="1.5" fill="#555"/><rect x="10" y="6.2" width="1.5" height="9.6" fill="#555"/></svg>
<div style="left:1150px;top:916px;width:3px;height:3px;background:#b4b4b4"></div>
<div style="left:1150px;top:921px;width:3px;height:3px;background:#b4b4b4"></div>
<div style="left:1150px;top:926px;width:3px;height:3px;background:#b4b4b4"></div>
<div style="left:1189px;top:913px;width:684px;height:19px;background:#f0f0f0"></div>
<div style="left:1170px;top:913px;width:19px;height:19px;background:#fff;border:1px solid #9a9a9a;box-sizing:border-box"></div>
<svg style="left:1170px;top:913px" width="19" height="19"><polygon points="6.5,9.5 11,5 11,14" fill="#222"/></svg>
<div style="left:1188px;top:913px;width:599px;height:19px;background:#fff;border:1px solid #9a9a9a;box-sizing:border-box"></div>
<div style="left:1873px;top:913px;width:19px;height:19px;background:#fff;border:1px solid #9a9a9a;box-sizing:border-box"></div>
<svg style="left:1873px;top:913px" width="19" height="19"><polygon points="8,5 12.5,9.5 8,14" fill="#222"/></svg>
<div style="left:0px;top:939px;width:1919px;height:27px;background:#f3f3f3"></div>
<div style="left:0px;top:965px;width:1919px;height:1px;background:#9a9a9a"></div>
<div style="left:14.40px;top:945.80px;font-size:13px;line-height:13px;font-weight:normal;color:#333;white-space:pre;transform-origin:0 0;transform:scaleX(0.9474)">Ready</div>
<svg style="left:72px;top:940px" width="68" height="24"><g fill="#505050"><circle cx="8.3" cy="7.3" r="3.4"/><rect x="13" y="5.1" width="6.8" height="3.4"/><rect x="6.2" y="11" width="1.1" height="7.8"/><rect x="18.7" y="8.5" width="1.1" height="10.3"/><rect x="6.2" y="17.8" width="13.6" height="1.1"/><rect x="9" y="10" width="2" height="1"/><rect x="12" y="10" width="2" height="1"/><rect x="9" y="13" width="2" height="1"/><rect x="12" y="13" width="2" height="1"/><rect x="15" y="13" width="2" height="1"/><rect x="9" y="16" width="2" height="1"/><rect x="12" y="16" width="2" height="1"/><rect x="15" y="16" width="2" height="1"/><rect x="15" y="10" width="2" height="1"/></g><g fill="none" stroke="#505050"><path d="M50.2 4.9 A7.4 7.4 0 0 0 51.2 19.6" stroke-width="1.1" stroke-dasharray="3.6 1.6"/><path d="M51.5 4 V12" stroke-width="1.1"/><path d="M49 9.5 L51.5 12.3 L54 9.5" stroke-width="1.1"/><path d="M55 10.4 H59.5 M57.5 8.2 L59.8 10.4 L57.5 12.6" stroke-width="1.1"/></g><path d="M53.8 13.6 L62.5 21.6 M62.5 13.6 L53.8 21.6" stroke="#404040" stroke-width="1.7"/></svg>
<div style="left:138.00px;top:945.80px;font-size:13px;line-height:13px;font-weight:bold;color:#262626;white-space:pre;transform-origin:0 0;transform:scaleX(0.9785)">Accessibility: Investigate</div>
<svg style="left:1409px;top:943px" width="22" height="22"><rect x="0" y="0" width="18.7" height="12.7" rx="1.5" fill="#444"/><circle cx="13.3" cy="13.3" r="6.9" fill="#f3f3f3"/><rect x="12.3" y="7.2" width="2" height="3" fill="#444" transform="rotate(0 13.3 13.3)"/><rect x="12.3" y="7.2" width="2" height="3" fill="#444" transform="rotate(45 13.3 13.3)"/><rect x="12.3" y="7.2" width="2" height="3" fill="#444" transform="rotate(90 13.3 13.3)"/><rect x="12.3" y="7.2" width="2" height="3" fill="#444" transform="rotate(135 13.3 13.3)"/><rect x="12.3" y="7.2" width="2" height="3" fill="#444" transform="rotate(180 13.3 13.3)"/><rect x="12.3" y="7.2" width="2" height="3" fill="#444" transform="rotate(225 13.3 13.3)"/><rect x="12.3" y="7.2" width="2" height="3" fill="#444" transform="rotate(270 13.3 13.3)"/><rect x="12.3" y="7.2" width="2" height="3" fill="#444" transform="rotate(315 13.3 13.3)"/><circle cx="13.3" cy="13.3" r="4.6" fill="#444"/><circle cx="13.3" cy="13.3" r="1.7" fill="#f3f3f3"/><rect x="1.5" y="16.5" width="4.5" height="1.4" fill="#444"/></svg>
<div style="left:1430.00px;top:945.50px;font-size:13px;line-height:13px;font-weight:normal;color:#222;white-space:pre;transform-origin:0 0;transform:scaleX(0.9869)">Display Settings</div>
<div style="left:1547px;top:939px;width:50px;height:27px;background:#c8c8c8"></div>
<svg style="left:1563px;top:943px" width="19" height="19"><path d="M1.5 1.5H16.5V16.5H1.5Z M6.5 1.5V16.5 M11.5 1.5V16.5 M1.5 6.5H16.5 M1.5 11.5H16.5" fill="none" stroke="#666" stroke-width="1.2"/></svg>
<svg style="left:1612px;top:943px" width="20" height="18"><path d="M1.5 1.5H17.5V15.5H1.5Z" fill="none" stroke="#666" stroke-width="1.2"/><path d="M5.5 3.5H13.5V13.5H5.5Z" fill="none" stroke="#666" stroke-width="1.2"/><path d="M7.5 6.5H11.5M7.5 8.5H11.5M7.5 10.5H11.5" stroke="#666" stroke-width="0.9"/></svg>
<svg style="left:1662px;top:943px" width="20" height="19"><path d="M1.5 1.5H17.5V16.5H1.5Z" fill="none" stroke="#666" stroke-width="1.2"/><path d="M6.5 1.5V10.5 M11.5 1.5V10.5H1.5" fill="none" stroke="#666" stroke-width="1.2"/></svg>
<div style="left:1704px;top:951px;width:10px;height:1.1px;background:#444"></div>
<div style="left:1720px;top:951.5px;width:125px;height:1.2px;background:#444"></div>
<div style="left:1780px;top:945px;width:6px;height:14px;background:#444"></div>
<div style="left:1851px;top:951px;width:10px;height:1.1px;background:#444"></div>
<div style="left:1855.5px;top:946.5px;width:1.1px;height:10px;background:#444"></div>
<div style="left:1877.50px;top:946.92px;font-size:12.5px;line-height:12.5px;font-weight:normal;color:#444;white-space:pre;transform-origin:0 0;transform:scaleX(0.9473)">100%</div>
</body></html>
